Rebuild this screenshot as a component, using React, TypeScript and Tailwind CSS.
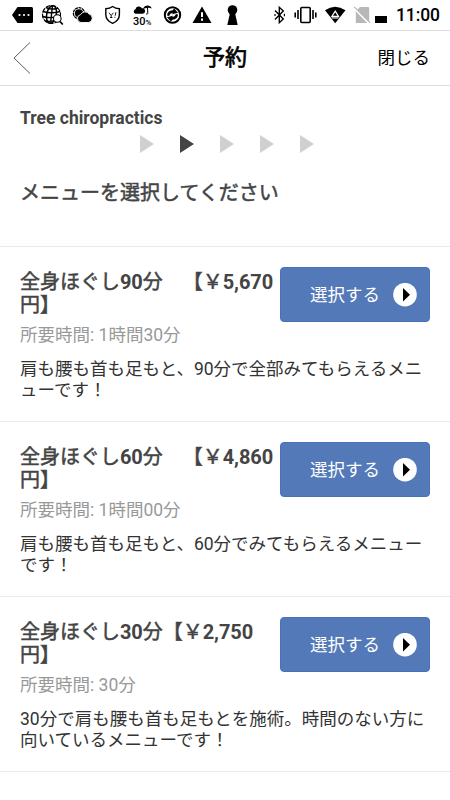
import React from 'react';

const menus = [
  {
    id: 1,
    title: '全身ほぐし90分　【￥5,670円】',
    time: '1時間30分',
    description: '肩も腰も首も足もと、90分で全部みてもらえるメニューです！',
  },
  {
    id: 2,
    title: '全身ほぐし60分　【￥4,860円】',
    time: '1時間00分',
    description: '肩も腰も首も足もと、60分でみてもらえるメニューです！',
  },
  {
    id: 3,
    title: '全身ほぐし30分【￥2,750円】',
    time: '30分',
    description: '30分で肩も腰も首も足もとを施術。時間のない方に向いているメニューです！',
  },
];

const steps = [1, 2, 3, 4, 5];
const currentStep = 2;

function StatusBar() {
  return (
    <div className="flex h-[30px] items-center bg-white text-black">
      {/* Message */}
      <svg className="ml-3" width="22" height="30" viewBox="0 0 22 30">
        <path d="M5.5 7H19.5Q21 7 21 8.5V21.5Q21 23 19.5 23H5.5L0 15Z" />
        <g fill="#fff">
          <circle cx="7.5" cy="15" r="1.1" />
          <circle cx="12" cy="15" r="1.1" />
          <circle cx="16.5" cy="15" r="1.1" />
        </g>
      </svg>

      {/* Globe search */}
      <svg className="ml-[7px]" width="23" height="30" viewBox="0 0 23 30" fill="none" stroke="currentColor">
        <circle cx="10.5" cy="14.5" r="9" strokeWidth="1.2" strokeDasharray="5 1" />
        <ellipse cx="10.5" cy="14.5" rx="4.8" ry="9" strokeWidth="1.5" transform="rotate(12 10.5 14.5)" />
        <path d="M11.5 5.5 9.5 23.5M2 11.5Q10 14 19 11.5M1.5 16.5Q10 19 19.5 16M5 7.5Q11 10.5 17 8M4 21Q10 22 16 20" strokeWidth="1.4" />
        <circle cx="16.3" cy="18.5" r="3.8" fill="#fff" strokeWidth="1.1" />
        <path d="m19 21.5 2.8 3" strokeWidth="1.8" />
      </svg>

      {/* Weather */}
      <svg className="ml-[8px]" width="21" height="30" viewBox="0 0 21 30">
        <circle cx="7" cy="13.3" r="5.6" fill="none" stroke="currentColor" strokeWidth="1.3" strokeDasharray="3 .6" />
        <circle cx="7" cy="13.3" r="4.1" />
        <path
          d="M9 22.5a4 4 0 0 1-.3-7.9 4.8 4.8 0 0 1 8.4-.5 4.3 4.3 0 0 1-.5 8.4Z"
          stroke="#fff"
          strokeWidth="0.9"
        />
      </svg>

      {/* Shield */}
      <svg className="ml-[12px]" width="17" height="30" viewBox="0 0 17 30" fill="none" stroke="currentColor">
        <path d="M7.6 6.5Q10.4 8.5 14.4 8.8V14.5Q14.4 20.5 7.6 23.3Q.8 20.5 .8 14.5V8.8Q4.9 8.5 7.6 6.5Z" strokeWidth="1.4" />
        <path d="m4 12.8 2.2 2.7 2.2-2.7M6.2 15.5v2M5 17.5h2.4M10.9 12.2l-.8 3.6M9.8 16.8v1" strokeWidth="0.9" />
      </svg>

      {/* Rain chance */}
      <div className="ml-[11px] flex h-[30px] w-[20px] flex-col items-start">
        <svg className="mt-[5px]" width="20" height="10" viewBox="0 0 20 10">
          <path d="M2.5 8.8a2.4 2.4 0 0 1 0-4.6 3.4 3.4 0 0 1 6.3-1 2.8 2.8 0 0 1 .8 5.6ZM10 4.2Q11 1 14 .6 17.5.3 18.8 3.6Q16 2.4 14.8 3Q12 2.8 10 4.2Z" />
          <path d="m14.4 1 .4 7.4q-.5 1.5-1.6.4" fill="none" stroke="currentColor" />
        </svg>
        <div className="mt-[1px] flex items-baseline font-['Roboto'] text-[11px] leading-[12px] font-medium">
          30<span className="text-[8px]">%</span>
        </div>
      </div>

      {/* Sync */}
      <svg className="ml-[10px]" width="20" height="30" viewBox="0 0 20 30">
        <circle cx="9.5" cy="15" r="7.7" fill="none" stroke="currentColor" strokeWidth="2" />
        <path d="M4 15.5Q4.5 10.5 9.5 10.3L11.2 8.5 15 12.8 9 14.2 9.8 12.8Q7 13 6 16ZM15 14.5Q14.5 19.5 9.5 19.7L7.8 21.5 4 17.2 10 15.8 9.2 17.2Q12 17 13 14Z" />
      </svg>

      {/* Warning */}
      <svg className="ml-[9px]" width="20" height="30" viewBox="0 0 20 30">
        <path d="M10 6.5 19.5 23H.5Z" />
        <path d="M9 12.3h2v4.6H9ZM9 18.6h2v2.1H9Z" fill="#fff" />
      </svg>

      {/* Keyhole */}
      <svg className="ml-[15px]" width="12" height="30" viewBox="0 0 12 30">
        <circle cx="5.5" cy="10" r="4.8" />
        <path d="M3 13h5l2.7 12H.3Z" />
      </svg>

      {/* Bluetooth */}
      <svg className="ml-[35px]" width="12" height="30" viewBox="0 0 12 30" fill="none" stroke="currentColor" strokeWidth="1.4">
        <path d="M1 10.5 9.3 19 5.3 22.7V7.3L9.3 11 1 19.5" />
        <path d="M10.4 13.8v2.4M1 14v2" strokeWidth="1.2" />
      </svg>

      {/* Vibrate */}
      <svg className="ml-[8px]" width="24" height="30" viewBox="0 0 24 30" fill="none" stroke="currentColor" strokeWidth="1.6">
        <rect x="6.8" y="7.5" width="9.4" height="15" rx="1" />
        <path d="M4 10v9M1.2 12.5v5M19 10v9M21.8 12.5v5" />
      </svg>

      {/* Wi-Fi */}
      <svg className="ml-[7px]" width="21" height="30" viewBox="0 0 21 30">
        <path d="M0 10.3Q10 3.3 20.5 10.3L10.2 23.3Z" />
        <path d="m10.2 11.2 3.4 5.3H6.8Z" fill="none" stroke="#fff" strokeWidth="1.3" />
        <path d="M7 18h6.4" stroke="#fff" />
      </svg>

      {/* No SIM */}
      <svg className="ml-[8px]" width="17" height="30" viewBox="0 0 17 30">
        <path d="M6 7h8q1.2 0 1.2 1.2V23H1.8V11.2Z" fill="#b8b8b8" />
        <path d="m-.5 7.7 16 16" stroke="#fff" strokeWidth="2" />
        <path d="m.2 6.8 16 16" stroke="#b8b8b8" strokeWidth="1.2" />
      </svg>

      <div className="mt-[9px] ml-[4px] h-[7px] w-[12px] bg-black" />
      <span className="ml-[9px] pt-px font-['Roboto'] text-[17.5px] leading-[29px] font-medium tracking-[-0.1px]">11:00</span>
    </div>
  );
}

function Header() {
  return (
    <header className="grid h-14 grid-cols-3 items-center border-y border-[#dedede] text-black">
      <button className="ml-3">
        <svg width="20" height="34" viewBox="0 0 20 34" fill="none" stroke="#333" strokeWidth="0.8">
          <path d="M18 1.5 2 17 18 32.5" />
        </svg>
      </button>
      <h1 className="text-center text-[22px] leading-6 font-normal [-webkit-text-stroke:0.7px]">予約</h1>
      <button className="mr-5 text-right text-[17.5px] leading-6">閉じる</button>
    </header>
  );
}

function MenuTitle({ title }: { title: string }) {
  // Latin digits use the real bold face, kana and kanji are only thickened
  return (
    <h3 className="mt-[4px] text-[20px] leading-[23.4px] font-normal text-[#444] [text-spacing-trim:space-all]">
      {title.split(/([\d,]+)/).map((part, i) =>
        /^\d/.test(part) ? (
          <span key={i} className="font-bold tracking-[-0.1px]">
            {part}
          </span>
        ) : (
          <span key={i} className="[-webkit-text-stroke:0.5px]">
            {part}
          </span>
        ),
      )}
    </h3>
  );
}

function MenuItem({ menu }: { menu: (typeof menus)[number] }) {
  return (
    <li className="h-[175px] border-t border-[#e9e9e9] px-5 pt-5">
      <div className="flex justify-between">
        <div className="w-[256px]">
          <MenuTitle title={menu.title} />
          <p className="mt-[6.2px] text-[17.5px] leading-[22px] text-[#999]">所要時間: {menu.time}</p>
        </div>
        <button className="-ml-1 flex h-[55px] w-[150px] shrink-0 items-center rounded-[4px] border border-[#4673b8] bg-[#5379b8] pl-[29px] text-[17.5px] text-white">
          <span className="pt-[2px]">選択する</span>
          <svg className="ml-[13px]" width="24" height="24" viewBox="0 0 24 24">
            <circle cx="12" cy="11.7" r="11.8" fill="#fff" />
            <path d="M10 5 17 11.7 10 18.5Z" fill="#000" />
          </svg>
        </button>
      </div>
      <p className="mt-[13px] text-[17.5px] leading-[20.5px] text-[#333]">{menu.description}</p>
    </li>
  );
}

export default function App() {
  return (
    <div lang="ja" className="h-[800px] w-[450px] overflow-hidden bg-white font-['Roboto','Noto_Sans_CJK_JP',sans-serif]">
      <StatusBar />
      <Header />

      <section className="h-[160px] px-5 pt-[22px] text-[#444]">
        <p className="text-[17.5px] leading-[21px] font-bold">Tree chiropractics</p>
        <div className="mt-[6px] ml-[120px] flex gap-[26px]">
          {steps.map((step) => (
            <svg key={step} width="14" height="18" viewBox="0 0 14 18">
              <path d="M0 0 14 9 0 18Z" fill={step === currentStep ? '#444' : '#d0d0d0'} />
            </svg>
          ))}
        </div>
        <h2 className="mt-[28px] text-[20px] leading-6 font-normal [-webkit-text-stroke:0.5px]">メニューを選択してください</h2>
      </section>

      <ul className="border-b border-[#e9e9e9]">
        {menus.map((menu) => (
          <MenuItem key={menu.id} menu={menu} />
        ))}
      </ul>
    </div>
  );
}
